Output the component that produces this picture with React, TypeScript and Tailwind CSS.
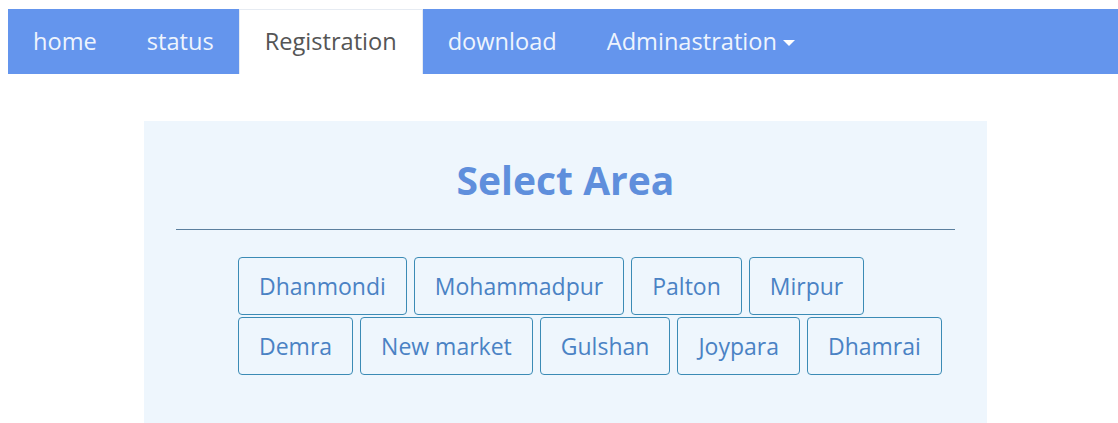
import React from 'react';

const navItems = [
  { label: 'home' },
  { label: 'status' },
  { label: 'Registration', active: true },
  { label: 'download' },
  { label: 'Adminastration', dropdown: true },
];

const areas = [
  'Dhanmondi',
  'Mohammadpur',
  'Palton',
  'Mirpur',
  'Demra',
  'New market',
  'Gulshan',
  'Joypara',
  'Dhamrai',
];

const App: React.FC = () => {
  return (
    <div className="min-h-screen bg-white pt-[9px] font-['Open_Sans',sans-serif]">
      {/* top navigation */}
      <nav className="ml-[8px] flex h-[65px] items-stretch bg-[#6495ed]">
        {navItems.map((item) => (
          <a
            key={item.label}
            href="#"
            className={
              item.active
                ? 'flex items-center border border-b-0 border-[#e6ebf2] bg-white px-[25px] text-[23.6px] text-[#555]'
                : 'flex items-center px-[25px] text-[23.6px] text-[#eef4fd]'
            }
          >
            {item.label}
            {item.dropdown && (
              <span className="ml-[6px] mt-[2px] inline-block h-0 w-0 border-x-[6px] border-t-[6px] border-x-transparent border-t-white" />
            )}
          </a>
        ))}
      </nav>

      {/* area picker */}
      <section className="ml-[144px] mt-[47px] h-[320px] w-[843px] bg-[#eef6fd] px-[32px] pt-[36px]">
        <h1 className="text-center text-[39px] font-bold leading-[46px] text-[#5f8fdc]">Select Area</h1>
        <hr className="mt-[26px] border-t border-[#5b7f9e]" />
        <div className="ml-[62px] mt-[27px] flex w-[720px] flex-wrap gap-x-[7px] gap-y-[2px]">
          {areas.map((area) => (
            <button
              key={area}
              className="rounded-[4px] border border-[#3b8bb5] px-[20px] py-[11px] text-[23px] leading-[34px] text-[#4a82c4]"
            >
              {area}
            </button>
          ))}
        </div>
      </section>
    </div>
  );
};

export default App;
